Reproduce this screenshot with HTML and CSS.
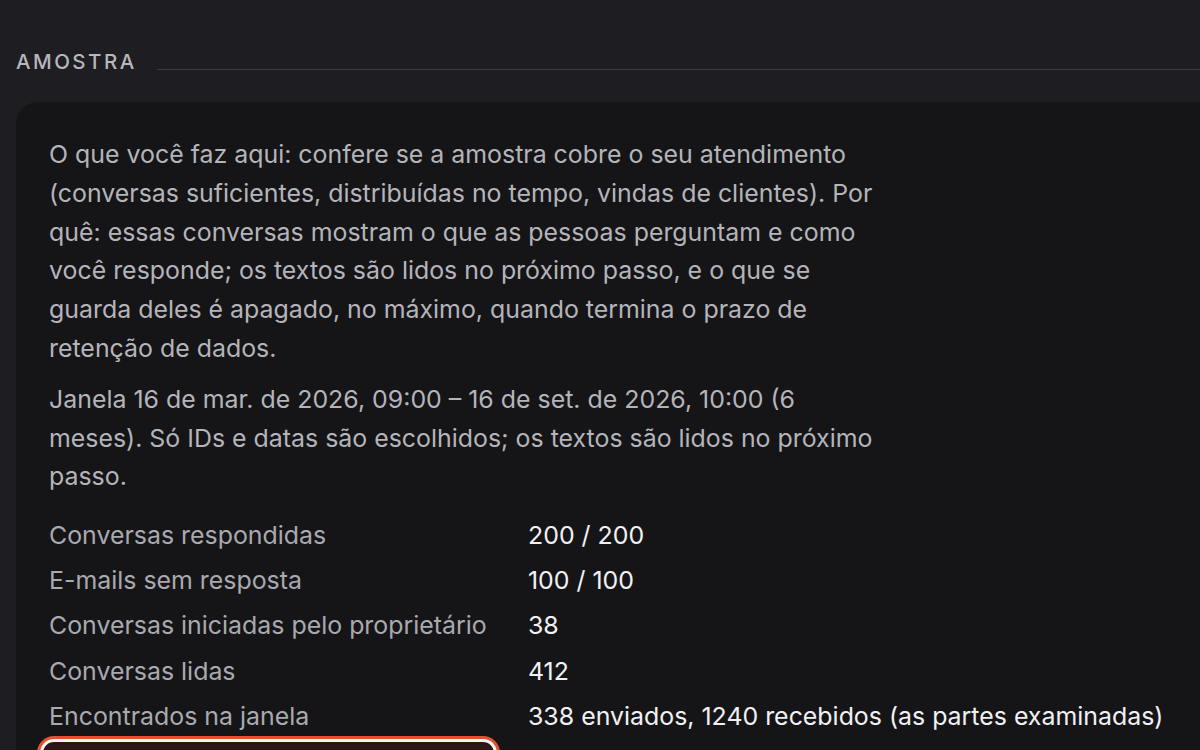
FILE: index.html
```html
<!DOCTYPE html>
<html lang="pt-BR">
<head>
<meta charset="utf-8">
<title>Amostra</title>
<link rel="stylesheet" href="styles.css">
</head>
<body>
<section class="section">
  <header class="section-head">
    <h2 class="section-title">AMOSTRA</h2>
    <div class="section-rule"></div>
  </header>
  <div class="card">
    <p class="para">O que você faz aqui: confere se a amostra cobre o seu atendimento (conversas suficientes, distribuídas no tempo, vindas de clientes). Por quê: essas conversas mostram o que as pessoas perguntam e como você responde; os textos são lidos no próximo passo, e o que se guarda deles é apagado, no máximo, quando termina o prazo de retenção de dados.</p>
    <p class="para">Janela 16 de mar. de 2026, 09:00 – 16 de set. de 2026, 10:00 (6 meses). Só IDs e datas são escolhidos; os textos são lidos no próximo passo.</p>
    <dl class="stats">
      <dt>Conversas respondidas</dt><dd>200 / 200</dd>
      <dt>E-mails sem resposta</dt><dd>100 / 100</dd>
      <dt>Conversas iniciadas pelo proprietário</dt><dd>38</dd>
      <dt>Conversas lidas</dt><dd>412</dd>
      <dt>Encontrados na janela</dt><dd>338 enviados, 1240 recebidos (as partes examinadas)</dd>
    </dl>
    <div class="focus-box"></div>
  </div>
</section>
</body>
</html>
```

FILE: styles.css
```css
html, body {
  margin: 0;
  padding: 0;
  background: #1e1e22;
  overflow: hidden;
  height: 100%;
}
body {
  font-family: Inter, "Noto Sans", sans-serif;
  color: #b3b3b9;
}
.section {
  padding: 48px 0 0 16px;
}
.section-head {
  display: flex;
  align-items: center;
  gap: 20px;
  height: 28px;
}
.section-title {
  margin: 0;
  font-size: 20.5px;
  font-weight: 500;
  letter-spacing: 0.12em;
  color: #b6b6bc;
  line-height: 28px;
}
.section-rule {
  flex: 1;
  height: 1px;
  margin-top: 14px;
  background: #3a3a41;
}
.card {
  margin-top: 26px;
  margin-right: -40px;
  background: #151517;
  border-radius: 22px;
  padding: 33px 33px 20px 33px;
  min-height: 700px;
}
.para {
  margin: 0 0 12px 0;
  max-width: 845px;
  font-size: 24.9px;
  line-height: 38.8px;
  color: #b4b4ba;
}
.stats {
  margin: 16px 0 0 0;
  display: grid;
  grid-template-columns: 479px auto;
  grid-auto-rows: 45.3px;
  align-items: center;
  font-size: 24.9px;
}
.stats dt {
  color: #a9a9af;
}
.stats dd {
  margin: 0;
  color: #f1f1f3;
}
.focus-box {
  margin: 0 0 0 -9px;
  width: 451px;
  height: 40px;
  border: 3px solid #f4f4f4;
  border-radius: 14px;
  background: #2a1716;
  box-shadow: 0 0 0 3px #e2522f;
}
```
